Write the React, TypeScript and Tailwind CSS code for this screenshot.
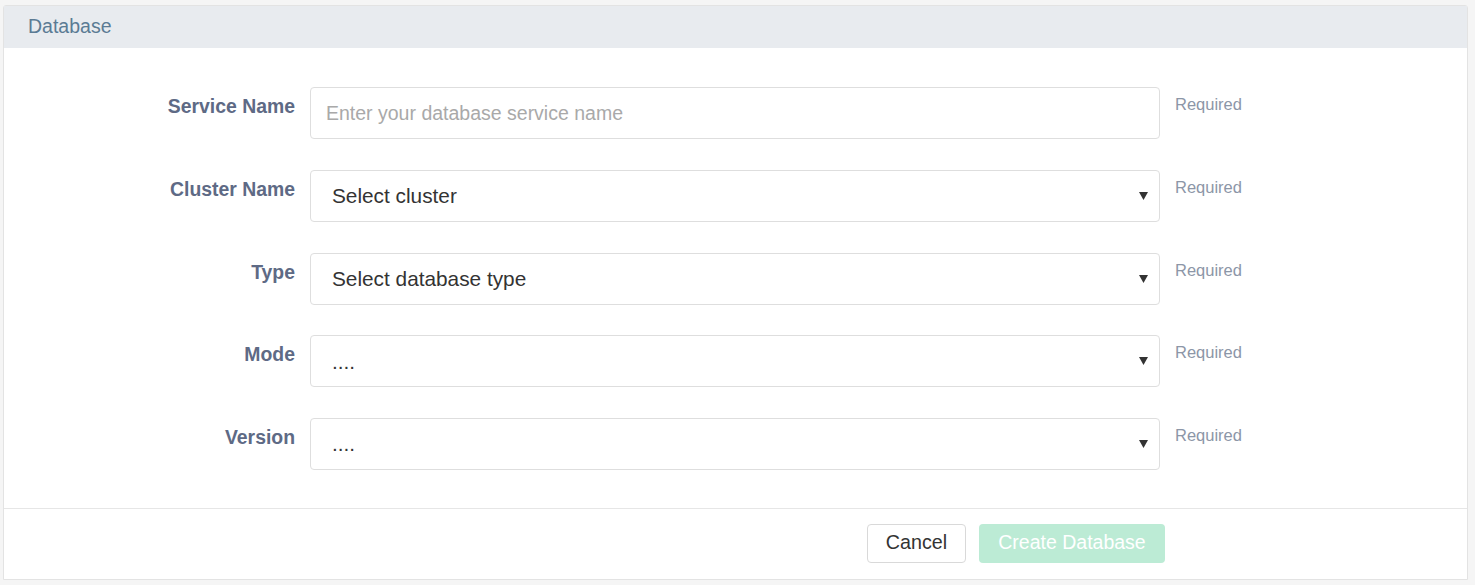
import React from "react";

const fields = [
  { label: "Service Name", kind: "input", value: "Enter your database service name" },
  { label: "Cluster Name", kind: "select", value: "Select cluster" },
  { label: "Type", kind: "select", value: "Select database type" },
  { label: "Mode", kind: "select", value: "...." },
  { label: "Version", kind: "select", value: "...." },
];

const App = () => {
  return (
    <div className="min-h-screen bg-[#f5f5f5] pt-[5px] pl-[3px] pr-[7px] font-['Liberation_Sans',Arial,sans-serif]">
      <div className="w-[1465px] h-[575px] bg-white border border-[#e3e3e3] rounded-t-[3px] flex flex-col">
        <div className="h-[42px] bg-[#e8ebef] flex items-center pl-[24px] text-[19.5px] text-[#5b7b94]">
          Database
        </div>

        <div className="flex flex-col gap-[30.75px] pt-[39px] pb-[38px]">
          {fields.map((f) => (
            <div key={f.label} className="flex">
              <label className="w-[291px] text-right pt-[9px] text-[19.4px] font-bold text-[#5e6a85] leading-[21px]">
                {f.label}
              </label>
              <div className="ml-[15px] w-[850px] h-[52px] border border-[#dedede] rounded-[4px] flex items-center relative">
                {f.kind === "input" ? (
                  <span className="pl-[15px] pt-[2px] text-[19.5px] text-[#a9a9a9]">{f.value}</span>
                ) : (
                  <>
                    <span className="pl-[21px] text-[20.8px] text-[#333]">{f.value}</span>
                    <svg className="absolute right-[11px] top-[21px]" width="9" height="8" viewBox="0 0 9 8">
                      <path d="M0 0 L9 0 L4.5 8 Z" fill="#333" />
                    </svg>
                  </>
                )}
              </div>
              <div className="ml-[15px] pt-[8px] text-[16.5px] text-[#8c96a7] leading-[19px]">Required</div>
            </div>
          ))}
        </div>

        <div className="border-t border-[#e6e6e6] flex-1 flex pt-[15px] pl-[863px] gap-[13px]">
          <button className="h-[39px] w-[99px] border border-[#d9d9d9] rounded-[4px] text-[19.7px] text-[#333] bg-white leading-none pb-[1px]">
            Cancel
          </button>
          <button className="h-[39px] w-[186px] rounded-[4px] text-[19.5px] text-white bg-[#bcebd5] leading-none pb-[1px]">
            Create Database
          </button>
        </div>
      </div>
    </div>
  );
};

export default App;
